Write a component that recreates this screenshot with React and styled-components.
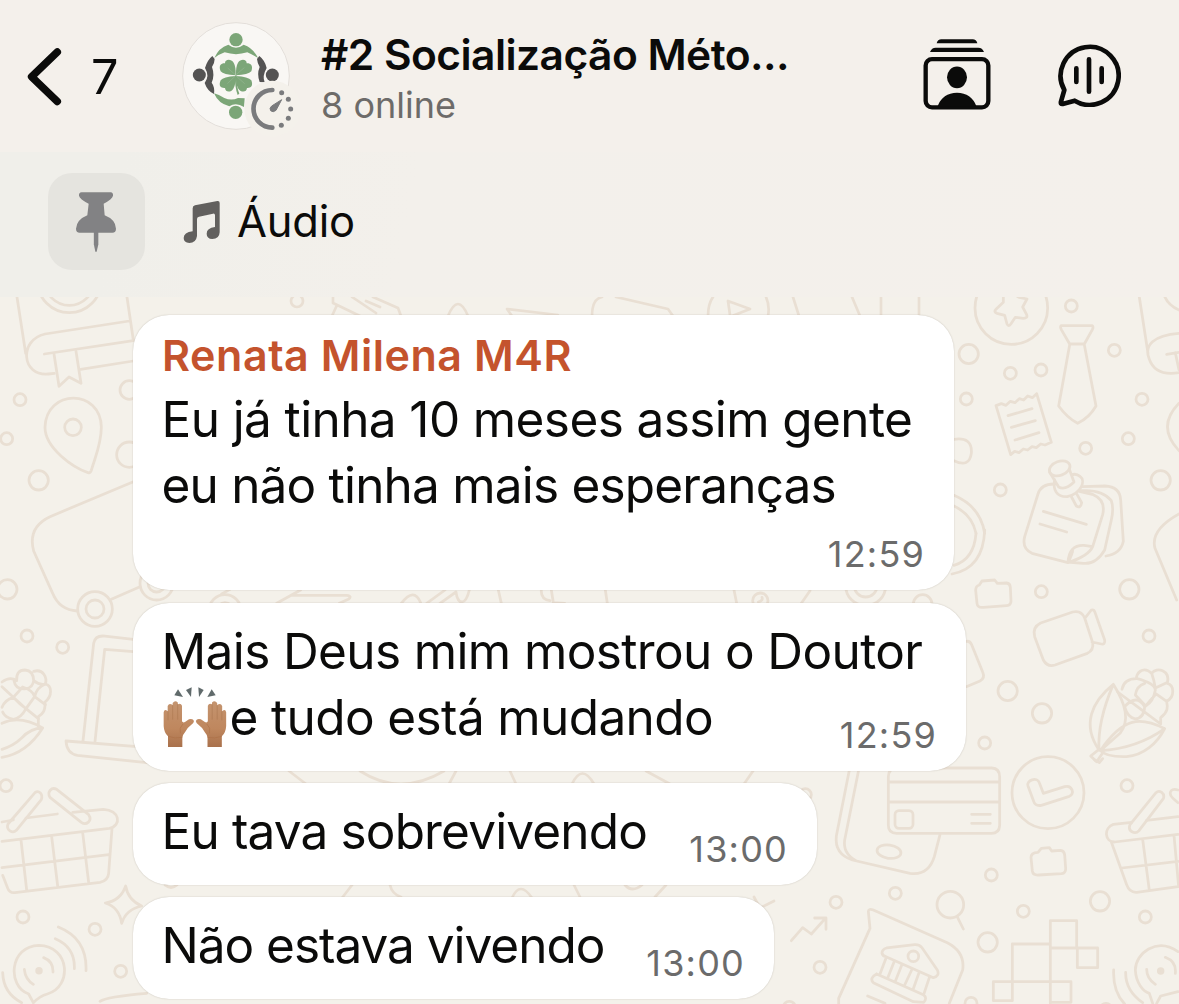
import React from "react";
import styled, { createGlobalStyle } from "styled-components";

const messages = [
  {
    id: 1,
    sender: "Renata Milena M4R",
    lines: [
      { text: "Eu já tinha 10 meses assim gente", track: -0.6 },
      { text: "eu não tinha mais esperanças", track: -0.8 },
    ],
    time: "12:59",
    width: 821,
    height: 275,
  },
  {
    id: 2,
    lines: [
      { text: "Mais Deus mim mostrou o Doutor", track: -0.62 },
      { text: "e tudo está mudando", track: -0.62, hands: true },
    ],
    time: "12:59",
    width: 833,
    height: 168,
  },
  {
    id: 3,
    lines: [{ text: "Eu tava sobrevivendo", track: -0.84 }],
    time: "13:00",
    width: 684,
    height: 101.5,
  },
  {
    id: 4,
    lines: [{ text: "Não estava vivendo", track: -1.02 }],
    time: "13:00",
    width: 641,
    height: 101.5,
  },
];

export default function App() {
  return (
    <Screen>
      <GlobalStyle />
      <Header>
        <BackIcon />
        <Unread>7</Unread>
        <GroupAvatar />
        <Heading>
          <h1>#2 Socialização Méto...</h1>
          <p>8 online</p>
        </Heading>
        <Actions>
          <StackIcon />
          <VoiceChatIcon />
        </Actions>
      </Header>
      <Pinned>
        <PinTile>
          <PinIcon />
        </PinTile>
        <NoteIcon />
        <PinnedLabel>Áudio</PinnedLabel>
      </Pinned>
      <Chat>
        <Wallpaper />
        {messages.map((message) => (
          <Message key={message.id} message={message} />
        ))}
      </Chat>
    </Screen>
  );
}

function Message({ message }) {
  return (
    <Bubble $width={message.width} $height={message.height}>
      <div className="body">
        {message.sender && <Sender>{message.sender}</Sender>}
        {message.lines.map((line) => (
          <Line key={line.text} $track={line.track}>
            {line.hands && <RaisedHands />}
            {line.text}
          </Line>
        ))}
      </div>
      <Time>{message.time}</Time>
    </Bubble>
  );
}

function BackIcon() {
  return (
    <svg width="44" height="70" viewBox="24 41 44 70" fill="none">
      <path
        d="M57.3 52 L31.6 76.7 L57.3 101.5"
        stroke="#0b0b0a"
        strokeWidth="7.5"
        strokeLinecap="round"
        strokeLinejoin="round"
      />
    </svg>
  );
}

function GroupAvatar() {
  return (
    <AvatarSvg width="130" height="130" viewBox="0 0 390 390">
      <circle cx="198" cy="198" r="160" fill="#f9f7f4" stroke="#dedad5" strokeWidth="2.5" />
      <g fill="#7ca678">
        <circle cx="198" cy="89" r="20" />
        <path d="M133 144 Q146 113 175 104 Q198 122 221 104 Q249 113 264 144 Q246 133 232 127 Q198 138 164 127 Q147 133 133 144Z" />
        <path d="M132 250 Q150 255 163 264 Q184 273 204 264 L224 265 L222 291 Q198 276 178 289 Q145 281 132 250Z" />
        <circle cx="197" cy="307" r="20" />
        <path d="M197 196 Q160 194 152 184 C144 164 156 159 165 160 C164 148 182 144 191 158 Q198 170 197 196Z" />
        <path d="M198 196 Q235 194 244 184 C251 165 240 159 230 160 C231 148 213 144 204 158 Q197 170 198 196Z" />
        <path d="M197 198 Q160 200 152 211 C144 229 154 235 165 234 C166 248 183 248 190 236 Q198 224 197 198Z" />
        <path d="M198 198 Q235 200 244 211 C251 229 241 235 231 234 C230 248 213 248 205 236 Q197 224 198 198Z" />
        <path d="M195 196 Q194 231 203 255 L208 251 Q199 231 200 196Z" />
      </g>
      <path
        d="M173 174 L197 195 L223 173 M172 221 L197 197 L224 221"
        stroke="#f9f7f4"
        strokeWidth="1"
        opacity="0.4"
        fill="none"
      />
      <g fill="#545353">
        <path d="M127 138 L134 147 Q134 158 126 171 Q135 196 125 218 Q135 231 132 252 Q112 243 104 219 Q120 198 105 174 Q112 150 127 138Z" />
        <circle cx="88" cy="195" r="19.5" />
        <path d="M268 138 L261 147 Q262 159 269 171 Q260 192 269 216 L284 217 Q276 198 290 174 Q285 151 268 138Z" />
        <circle cx="307" cy="195" r="19.5" />
      </g>
      <circle cx="307" cy="296" r="84" fill="#f4f1eb" />
      <path d="M307 240 A56.5 56.5 0 0 0 307 353" stroke="#7a7b7d" strokeWidth="14" strokeLinecap="round" fill="none" />
      <path d="M335 269 L318 301 Q309 309 302 302 Q297 295 305 288Z" fill="#7a7b7d" stroke="#7a7b7d" strokeWidth="3" strokeLinejoin="round" />
      <g fill="#7a7b7d">
        <circle cx="335" cy="248" r="7.5" />
        <circle cx="355" cy="268" r="7.5" />
        <circle cx="362" cy="297" r="7.5" />
        <circle cx="355" cy="325" r="7.5" />
        <circle cx="334" cy="346" r="7.5" />
      </g>
    </AvatarSvg>
  );
}

function StackIcon() {
  return (
    <svg width="68" height="71" viewBox="129 117 204 213">
      <path d="M170 130 Q173 118 184 118 H278 Q289 118 292 130Z" fill="#0b0b0a" />
      <path d="M150 156 Q155 143 167 143 H295 Q307 143 312 156Z" fill="#0b0b0a" />
      <rect x="137" y="177.500" width="188" height="144.500" rx="19" fill="none" stroke="#0b0b0a" strokeWidth="13" />
      <ellipse cx="231" cy="232" rx="30" ry="32.500" fill="#0b0b0a" />
      <path d="M172 320 Q188 278 231 278 Q274 278 290 320Z" fill="#0b0b0a" />
    </svg>
  );
}

function VoiceChatIcon() {
  return (
    <svg width="64" height="64" viewBox="530 130 192 192" fill="none" stroke="#0b0b0a" strokeLinecap="round" strokeLinejoin="round">
      <path d="M552 271 A87 87 0 1 1 583 303 L547 313 Q540 314 542 306 Z" strokeWidth="14" />
      <path d="M588 206 V247 M626 179 V276 M664 206 V247" strokeWidth="14" />
    </svg>
  );
}

function PinIcon() {
  return (
    <svg width="42" height="60" viewBox="225 577 126 180" fill="#828284">
      <path d="M245 578 H332 Q340 579 339 588 Q337 598 311 612 L314 647 Q347 660 348 687 Q348 699 337 699 H239 Q228 699 228 687 Q230 660 262 647 L266 612 Q239 598 237 588 Q236 579 245 578Z" />
      <path d="M281.500 697 H295 V734 L290 756 H286 L281.500 734Z" />
    </svg>
  );
}

function NoteIcon() {
  return (
    <svg width="38" height="44" viewBox="550 600 114 132" fill="#62605e">
      <path d="M579 625 Q579 618 586 616 L653 603 Q660 602 660 609 V697 Q659 717 638 717 Q621 716 621 701 Q621 684 646 681 V646 Q646 640 640 641 L598 650 Q592 651 592 657 V708 Q589 729 569 729 Q552 728 552 714 Q552 697 579 694Z" />
    </svg>
  );
}

function RaisedHands() {
  return (
    <HandsSvg width="68" height="65" viewBox="36 45 204 195">
      <defs>
        <linearGradient id="skin" x1="0" y1="0" x2="0" y2="1">
          <stop offset="0" stopColor="#c4946f" />
          <stop offset="0.6" stopColor="#bf875e" />
          <stop offset="1" stopColor="#a9714c" />
        </linearGradient>
        <g id="hand">
          <path
            d="M54 231 V199 Q42 188 41 168 V127 Q43 118 49 121 L53 124 V108 Q57 99 64 103 L68 105 V99 Q75 89 83 97 L84 103 Q92 98 96 107 V154 Q99 160 106 155 L117 148 Q129 145 132 153 Q131 161 124 164 Q111 173 105 187 Q97 196 97 203 V231Z"
            fill="url(#skin)"
          />
          <path d="M54 124 V151 M68 106 V149 M83 103 V149" stroke="#a8754d" strokeWidth="1.600" fill="none" />
          <path d="M99 162 Q86 173 91 190 M54 199 Q76 207 97 202" stroke="#aa6d43" strokeWidth="1.500" fill="none" />
        </g>
      </defs>
      <use href="#hand" />
      <use href="#hand" transform="translate(269.500 0) scale(-1 1)" />
      <g fill="#606a6b">
        <path d="M84 58 L99 81 L73 76Z" />
        <path d="M108 60 L125 52 L123 81Z" />
        <path d="M145 52 L161 60 L147 81Z" />
        <path d="M185 58 L197 76 L172 81Z" />
      </g>
    </HandsSvg>
  );
}

// each patch is drawn at three times its final size
function Patch({ x, y, dots = [], children }) {
  return (
    <g transform={`translate(${x} ${y}) scale(0.33333)`}>
      {dots.map(([cx, cy, r = 18]) => (
        <circle key={`${cx}-${cy}-${r}`} cx={cx} cy={cy} r={r} />
      ))}
      {children}
    </g>
  );
}

function Wallpaper() {
  return (
    <WallpaperSvg width="1179" height="707" viewBox="0 297 1179 707">
      {/* book, pin, camera */}
      <Patch x={0} y={290} dots={[[60, 329], [20, 446], [116, 571, 29], [22, 898, 29], [388, 300, 28], [388, 494, 38], [219, 412, 25], [285, 957, 52], [285, 957, 27], [470, 880, 50], [470, 880, 26]]}>
        <path d="M50 15 L77 190 M380 15 L400 150 M388 93 L135 132 C55 150 65 260 145 252 L163 250 M133 192 L400 152 M242 238 L400 213" />
        <path d="M162 192 L177 289 L207 261 L243 280 L228 184" />
        <circle cx="208" cy="-28" r="96" />
        <circle cx="208" cy="-28" r="74" />
        <path d="M264 548 C220 533 135 475 135 412 C138 295 303 295 304 412 C304 462 286 500 274 541 Q271 550 264 548Z" />
        <path d="M400 575 L150 680 Q82 712 101 783 L158 910 Q178 960 232 963 M334 928 L420 890" />
      </Patch>

      {/* corn, laptop, basket, radar */}
      <Patch x={0} y={610} dots={[[81, 78], [188, 112], [18, 527], [69, 921], [285, 958], [362, 1084]]}>
        <path d="M400 88 L308 78 Q285 78 281 100 L249 393 M400 125 L314 118 L285 395 M440 412 L198 393 Q200 430 232 436 L440 458" />
        <path d="M6 216 Q30 198 50 212 Q48 180 75 180 Q100 182 101 212 Q98 234 78 236 Q47 240 42 212 M101 184 C130 175 142 204 136 222 C156 226 158 258 135 276 C136 302 130 310 115 320 V350 M101 212 Q118 226 136 222" />
        <path d="M6 230 L40 262 L78 296 L115 326 M40 262 L68 231 Q100 242 104 260 L78 296 Q60 284 40 262 M104 260 L136 284 M104 260 Q110 232 136 222 M40 262 Q14 270 6 292 M78 296 Q62 326 40 328 Q14 322 8 306" />
        <path d="M6 340 Q60 314 128 354 Q80 430 6 442 M128 354 Q92 354 64 385 Q40 408 6 418" />
        <path d="M6 636 L40 630 M78 624 L172 612 M218 607 L310 598 C360 600 366 647 328 655 L6 694 M336 655 L326 790 Q324 812 300 817 L45 848 Q28 850 22 832 L8 796 M6 773 L326 734 M63 690 L80 840 M155 680 L173 828 M248 668 L266 818" />
        <path d="M105 548 L24 642 C17 660 38 672 49 661 L124 569 C130 550 115 540 105 548Z" />
        <path d="M170 538 L266 614 C278 632 259 648 244 637 L150 562 C140 545 155 530 170 538Z" />
        <path d="M377 828 Q384 870 425 888 Q378 898 365 940 Q358 892 316 879 Q362 872 377 828Z" />
        <circle cx="117" cy="1082" r="7" fill="#e9dfd3" />
        <path d="M100 1178 L86 1152 C20 1128 28 1008 117 1006 C210 1008 218 1130 142 1152 Q120 1158 100 1178 M73 1078 Q76 1108 100 1123 M131 1043 Q160 1054 159 1086 M166 986 Q226 1012 223 1076 M175 951 Q262 986 258 1082 M8 1088 Q10 1150 65 1178" />
        <path d="M300 1174 Q320 1160 440 1150" />
      </Patch>

      {/* star, tie, receipt, notes */}
      <Patch x={940} y={290} dots={[[394, 48], [523, 181], [303, 240], [211, 250], [79, 327], [606, 328], [565, 446], [437, 475], [181, 600], [86, 192, 29], [662, 571, 29], [214, 54, 109]]}>
        <path d="M190 10 V37 L168 58 Q160 66 171 70 L194 76 L201 102 Q206 112 213 101 L226 82 L250 85 Q264 85 260 74 L248 51 L261 27 L237 22 L214 8Z" />
        <path d="M363 107 H457 Q461 111 457 119 L433 162 H389 L364 119 Q360 110 363 107Z M389 164 L356 348 Q382 384 413 400 Q448 383 468 348 L433 164" />
        <path d="M168 347 L212 494 L224 484 L237 488 L250 477 L263 480 L276 470 L289 473 L302 462 L315 465 L334 457 L290 311 L277 323 L263 318 L251 330 L238 326 L225 338 L211 334 L198 346 L184 341Z M204 377 L276 356 M214 412 L286 392 M225 450 L297 428" />
        <path d="M597 15 L624 190 M717 130 C640 136 612 166 627 205 Q645 260 717 248 M680 193 L717 187 M706 188 L717 240 M672 15 Q684 46 717 60 M717 340 Q648 410 717 482" />
        <path d="M42 448 Q98 440 94 490 Q88 534 42 512 M42 616 Q122 650 134 730 M42 648 Q96 674 108 730" />
        <ellipse cx="359" cy="535" rx="32" ry="21" transform="rotate(-20 359 535)" />
        <path d="M329 547 L356 591 Q376 602 402 576 L388 538 M344 569 C338 600 350 621 382 620 C425 610 437 572 421 560 Q406 548 395 556 M393 618 L409 648 Q422 656 425 638 L408 608" />
        <path d="M342 582 Q303 582 294 612 L254 740 Q245 776 276 790 L384 818 Q400 785 398 782 M458 770 L488 674 Q498 630 460 614 L418 604 M424 602 Q488 598 514 632 Q522 654 514 690 L494 780 Q468 824 430 820 L382 816 M428 590 L495 588 Q540 590 542 630 L550 754 Q542 792 498 798 M384 818 Q386 764 432 766 L458 770 Q446 798 384 818 M310 664 L439 703 M300 702 L380 726" />
        <path d="M717 672 Q630 720 645 775 L710 930" />
      </Patch>

      {/* folder, video camera, corn */}
      <Patch x={940} y={520} dots={[[304, 215], [627, 348], [134, 669], [568, 208, 29], [203, 513, 29], [306, 580, 29]]}>
        <path d="M134 30 Q130 145 36 162 M108 40 Q102 118 42 136" />
        <path d="M118 195 L126 183 L164 180 L172 190 L200 189 Q210 190 211 202 L213 243 Q213 256 200 257 L130 262 Q112 264 111 250 L107 211 Q107 198 118 195Z" />
        <path d="M302 309 L398 276 Q424 270 434 294 L458 368 Q462 390 442 400 L345 435 Q322 442 310 420 L284 350 Q276 322 302 309Z M436 293 L454 270 Q462 268 465 277 L494 360 Q496 374 484 372 L456 366" />
        <path d="M79 364 Q90 362 95 374 L128 456 Q136 474 120 483 L79 500" />
        <path d="M520 493 C455 545 425 614 477 690 Q472 604 520 493 C558 554 570 602 540 640 L481 692 Q500 712 560 710 C610 706 652 670 674 626 C602 590 550 590 481 692 M481 692 Q590 686 674 626" />
        <path d="M477 688 L452 708 L470 725 L490 696 M533 516 L592 560 L662 612 V593 C684 576 684 562 680 544 C706 530 702 495 682 490 C692 450 650 440 635 460 C608 434 586 464 590 476 Q552 476 546 508 M592 476 Q644 490 646 510 Q640 545 617 558 L586 525 Q590 498 614 490 M646 504 Q642 480 635 460 M646 504 L680 488 M554 560 Q590 520 614 560 Q612 594 586 597 Q562 592 554 560 M646 520 L680 544 M617 558 L645 525" />
      </Patch>

      {/* phone, card, check, bank, pixels */}
      <Patch x={780} y={760} dots={[[1041, 77], [634, 345], [346, 400], [168, 427], [730, 454], [1096, 471], [120, 622], [76, 104], [573, 730], [28, 742], [978, 748], [960, 424, 29], [623, 547, 29], [804, 98, 108], [511, 434, 40], [400, 589, 16]]}>
        <path d="M350 24 H635 Q659 25 659 50 V196 Q658 220 634 220 H350 Q325 220 325 196 V50 Q326 24 350 24 M325 66 H659 M325 126 H659 M575 163 H631 M575 190 H631" />
        <rect x="345" y="152" width="54" height="53" rx="12" />
        <path d="M211 15 L169 228 Q163 282 217 300 L390 340 Q445 348 463 290 L480 224 M239 15 L194 240 Q188 280 228 302" />
        <ellipse cx="327" cy="275" rx="36" ry="20" transform="rotate(8 327 275)" />
        <path d="M744 78 C738 60 772 50 778 68 L790 100 L854 80 C876 74 886 102 868 109 L784 136 Q766 139 761 124Z" />
        <path d="M533 473 L550 507 M944 0 L958 8 L968 -4" />
        <path d="M774 277 L784 265 L808 263 L815 273 L842 271 Q852 272 854 284 L857 326 Q857 339 845 341 L776 345 Q759 346 757 333 L753 292 Q753 278 774 277Z" />
        <path d="M1194 170 L1100 181 M1055 187 L1000 193 C970 204 974 246 1004 246 L1194 223 M994 246 L1040 374 Q1048 398 1070 397 L1194 380 M1026 324 L1194 304 M1088 238 L1108 391 M1182 226 L1196 380" />
        <path d="M1128 98 L1050 194 C1042 214 1065 225 1077 212 L1150 116 C1156 100 1138 88 1128 98Z M1194 90 C1165 82 1168 106 1178 114 L1194 128" />
        <path d="M34 542 L68 503 L94 522 L136 475 M104 474 H138 V508" />
        <path d="M270 505 L265 454 Q266 445 280 450 L502 548 Q556 576 548 630 L508 730 M270 505 L176 715 V732" />
        <path d="M306 579 Q306 568 320 564 L404 554 Q417 553 425 562 L472 630 Q480 648 460 653 L318 590 Q307 588 306 579 M317 597 L300 642 M342 606 L324 652 M365 616 L346 664 M395 630 L374 675 M417 638 L400 686 M448 653 L431 704 M290 642 L430 704 Q443 714 431 727 L400 725 L280 668 Q267 654 290 642 M263 708 L315 730" />
        <path d="M811 482 H890 V564 H811Z M697 552 H811 M697 552 V665 M640 665 H873 M811 564 V730 M890 564 H953 V623 H892 V564 M640 665 V722 H697 V665 M811 727 H873 V665" />
        <circle cx="1142" cy="633" r="7" fill="#e9dfd3" />
        <path d="M1194 575 C1130 530 1066 580 1066 630 C1068 670 1090 694 1108 700 L1118 730 M1130 730 L1142 708 L1194 695 M1100 628 Q1100 656 1126 673 M1156 592 Q1190 605 1186 640 M1037 637 Q1036 692 1088 728 M1001 630 Q998 694 1034 732" />
      </Patch>

      {/* slivers that show between the bubbles */}
      <Patch x={130} y={574} dots={[[285, 110, 48], [285, 110, 24]]}>
        <path d="M275 60 L300 46 M440 88 L512 48 M485 64 H650 Q668 66 655 76 L628 88 M814 88 Q852 38 872 86 M890 88 L945 48 M930 88 L978 54 Q982 84 996 84 Q1010 82 1018 48 M1105 48 L1114 88 M1234 48 Q1232 76 1260 80" />
      </Patch>
      <Patch x={550} y={574} dots={[[631, 80, 23], [947, 35, 60], [947, 35, 34], [1118, 90, 28]]}>
        <path d="M4 48 L10 86 L44 88 M166 48 L172 88 M552 48 L560 88 M780 50 L754 88 M625 84 Q640 80 636 70" />
      </Patch>
      <path d="M333 297 V303 L360 316 M352 297 L376 313 M366 301 L380 307 M373 297 L398 308 L401 316 M337 305 L332 316 M448 316 Q458 292 468 316 M558 315 L507 309 L512 316 M592 316 Q592 299 602 297 M616 297 L668 309 L673 316 M708 316 Q708 304 713 297 M728 301 L750 309 L732 316 M728 301 L730 315 M766 297 Q770 306 768 316 M793 297 L799 316 M852 297 L860 316 M881 297 V316 M919 297 V316" />
      <circle cx="297" cy="301" r="6" />
      <path d="M289 771 L306 784 M360 771 Q400 797 444 771 M456 771 L449 784 M510 771 L516 784 M572 784 Q582 763 594 784 M646 771 L670 784 M744 784 L753 771" />
      <path d="M165 885 Q171 890 177 885 M342 898 L352 885 M390 885 Q392 894 401 897 M512 898 Q520 880 532 898 M574 885 L580 897 M625 885 Q632 893 642 885 M655 897 L666 885 M754 897 L760 908 L774 901" />
    </WallpaperSvg>
  );
}

const GlobalStyle = createGlobalStyle`
  * {
    box-sizing: border-box;
  }
  body {
    margin: 0;
    overflow: hidden;
    background: #f4f0eb;
    color: #0b0b0a;
    font-family: Inter, "Liberation Sans", sans-serif;
  }
  svg {
    display: block;
    flex-shrink: 0;
  }
`;

const Screen = styled.div`
  width: 1179px;
  height: 1004px;
  display: flex;
  flex-direction: column;
  overflow: hidden;
`;

const Header = styled.header`
  height: 152px;
  padding: 0 58px 0 24px;
  display: flex;
  align-items: center;
`;

const Unread = styled.span`
  width: 79px;
  margin-left: 23px;
  padding-top: 2px;
  font-size: 48.5px;
  line-height: 60px;
`;

const AvatarSvg = styled.svg`
  margin-top: -2px;
`;

const Heading = styled.div`
  margin-left: 21px;
  padding-top: 3px;
  white-space: nowrap;
  h1 {
    margin: 0 0 2px;
    font-size: 42.5px;
    font-weight: 600;
    line-height: 52px;
    letter-spacing: -0.55px;
  }
  p {
    margin: 0;
    font-size: 36px;
    line-height: 44px;
    color: #6d6b69;
  }
`;

const Actions = styled.div`
  margin-left: auto;
  padding-bottom: 3px;
  display: flex;
  align-items: center;
  gap: 66px;
`;

const Pinned = styled.div`
  height: 145px;
  padding: 0 0 6px 48px;
  display: flex;
  align-items: center;
  background: linear-gradient(100deg, #f0efea 10%, #f3f0eb 35%, #f4f0eb);
`;

const PinTile = styled.div`
  width: 97px;
  height: 97px;
  margin-right: 38px;
  padding-right: 2px;
  display: flex;
  align-items: center;
  justify-content: center;
  border-radius: 24px;
  background: #e5e4df;
`;

const PinnedLabel = styled.span`
  margin-left: 16px;
  padding-bottom: 2px;
  font-size: 43.5px;
  letter-spacing: -0.2px;
`;

const Chat = styled.main`
  position: relative;
  flex: 1;
  min-height: 0;
  padding: 18px 0 0 133px;
  display: flex;
  flex-direction: column;
  gap: 12.5px;
  overflow: hidden;
  background: #f4f1ea;
`;

const WallpaperSvg = styled.svg`
  position: absolute;
  top: 0;
  left: 0;
  fill: none;
  stroke: #e9dfd3;
  stroke-width: 2.7;
  stroke-linecap: round;
  stroke-linejoin: round;
  g {
    stroke-width: 8.3;
  }
`;

const Bubble = styled.article`
  position: relative;
  flex-shrink: 0;
  width: ${(props) => props.$width}px;
  height: ${(props) => props.$height}px;
  padding: 15px 29px 14px;
  display: grid;
  border-radius: 36px;
  background: #fff;
  box-shadow: 0 0 1.5px rgba(60, 50, 30, 0.28);
  .body {
    grid-area: 1 / 1;
  }
`;

const Sender = styled.div`
  margin-bottom: 5px;
  color: #c4532d;
  font-size: 43px;
  font-weight: 600;
  line-height: 51px;
  letter-spacing: 0.55px;
`;

const Line = styled.div`
  display: flex;
  align-items: center;
  margin-left: -0.5px;
  font-size: 49.5px;
  line-height: 66px;
  letter-spacing: ${(props) => props.$track}px;
  white-space: pre;
`;

const HandsSvg = styled.svg`
  margin-top: 1px;
`;

const Time = styled.time`
  grid-area: 1 / 1;
  align-self: end;
  justify-self: end;
  color: #6b6b6b;
  font-size: 36px;
  line-height: 44px;
  letter-spacing: 1.2px;
`;
